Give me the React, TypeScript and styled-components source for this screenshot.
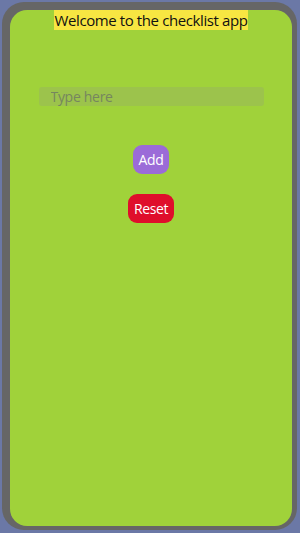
import React from 'react';
import styled, { createGlobalStyle } from 'styled-components';

const GlobalStyle = createGlobalStyle`
  html, body {
    margin: 0;
    padding: 0;
    background: #6b78a6;
    font-family: "Open Sans", "Noto Sans", sans-serif;
  }
`;

const Frame = styled.div`
  box-sizing: border-box;
  width: 295px;
  height: 528px;
  margin: 2px 0 0 2px;
  background: #666666;
  border-radius: 22px;
  padding: 8px 5px 4px 8px;
  display: flex;
`;

const Screen = styled.div`
  flex: 1;
  background: #a0d23a;
  border-radius: 17px;
  display: flex;
  flex-direction: column;
  align-items: center;
`;

const Title = styled.span`
  background: #f7e642;
  color: #111;
  font-size: 15px;
  letter-spacing: -0.4px;
  line-height: 20px;
  padding: 0 1px;
`;

const Input = styled.input`
  box-sizing: border-box;
  width: 225px;
  height: 19px;
  margin: 57px 0 0 0;
  border: none;
  outline: none;
  border-radius: 3px;
  background: rgba(140, 140, 140, 0.22);
  padding: 0 12px;
  font-family: "Open Sans", "Noto Sans", sans-serif;
  font-size: 14px;
  letter-spacing: -0.3px;
  color: #333;
  &::placeholder {
    color: #76865f;
  }
`;

const Button = styled.button<{ $bg: string }>`
  border: none;
  background: ${p => p.$bg};
  color: #fff;
  font-family: "Open Sans", "Noto Sans", sans-serif;
  font-size: 14px;
  letter-spacing: -0.4px;
  line-height: 19px;
  padding: 5px 6px;
  border-radius: 9px;
  cursor: pointer;
`;

const Buttons = styled.div`
  display: flex;
  flex-direction: column;
  align-items: center;
  gap: 20px;
  margin-top: 39px;
`;

export default function App() {
  return (
    <>
      <GlobalStyle />
      <Frame>
        <Screen>
          <Title>Welcome to the checklist app</Title>
          <Input placeholder="Type here" />
          <Buttons>
            <Button $bg="#9b6bd8">Add</Button>
            <Button $bg="#df0e2b">Reset</Button>
          </Buttons>
        </Screen>
      </Frame>
    </>
  );
}
